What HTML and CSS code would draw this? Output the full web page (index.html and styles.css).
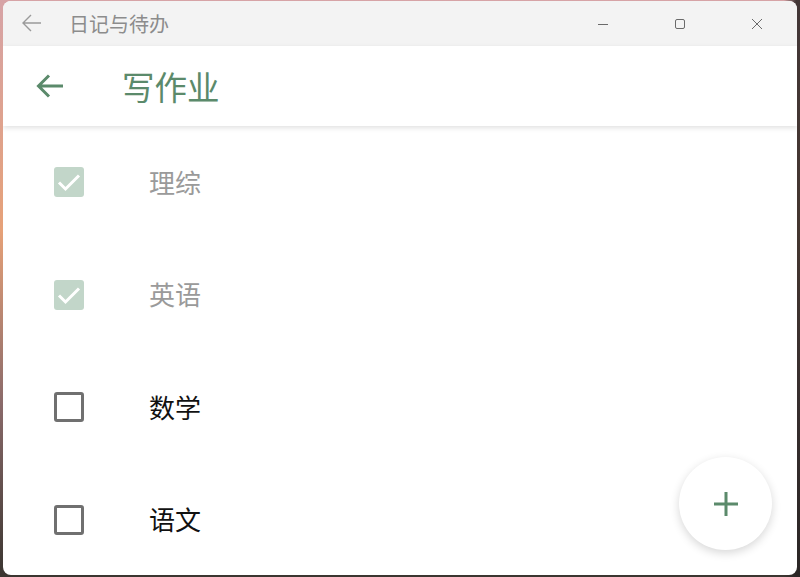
FILE: index.html
```html
<!DOCTYPE html>
<html lang="zh">
<head>
<meta charset="utf-8">
<link rel="stylesheet" href="styles.css">
</head>
<body>
<div class="window">
  <div class="titlebar">
    <svg class="tb-back" width="22" height="20" viewBox="0 0 22 20"><path d="M20 10H2M10 2L2 10l8 8" fill="none" stroke="#9a9a9a" stroke-width="1.4"/></svg>
    <span class="tb-title">日记与待办</span>
    <div class="tb-controls">
      <span class="ctl"><svg width="12" height="12" viewBox="0 0 12 12"><path d="M1 6.5h10" stroke="#6a6a6a" stroke-width="1"/></svg></span>
      <span class="ctl"><svg width="12" height="12" viewBox="0 0 12 12"><rect x="1.5" y="1.5" width="9" height="9" rx="1.5" fill="none" stroke="#6a6a6a" stroke-width="1"/></svg></span>
      <span class="ctl"><svg width="12" height="12" viewBox="0 0 12 12"><path d="M1 1l10 10M11 1L1 11" stroke="#6a6a6a" stroke-width="1"/></svg></span>
    </div>
  </div>
  <div class="appbar">
    <svg class="ab-back" width="28" height="26" viewBox="0 0 28 26"><path d="M27 13H3M13 2.5L2.5 13 13 23.5" fill="none" stroke="#5b8a6b" stroke-width="3"/></svg>
    <span class="ab-title">写作业</span>
  </div>
  <div class="list">
    <div class="row done">
      <span class="cb"><svg width="30" height="30" viewBox="0 0 30 30"><path d="M5 15.5l6.5 6.5L25 8.5" fill="none" stroke="#fff" stroke-width="3"/></svg></span>
      <span class="label">理综</span>
    </div>
    <div class="row done">
      <span class="cb"><svg width="30" height="30" viewBox="0 0 30 30"><path d="M5 15.5l6.5 6.5L25 8.5" fill="none" stroke="#fff" stroke-width="3"/></svg></span>
      <span class="label">英语</span>
    </div>
    <div class="row">
      <span class="cb"></span>
      <span class="label">数学</span>
    </div>
    <div class="row">
      <span class="cb"></span>
      <span class="label">语文</span>
    </div>
  </div>
  <button class="fab"><svg width="26" height="26" viewBox="0 0 26 26"><path d="M13 1v24M1 13h24" stroke="#5b8a6b" stroke-width="3"/></svg></button>
</div>
</body>
</html>
```
FILE: styles.css
```css
html, body {
  margin: 0;
  padding: 0;
  width: 800px;
  height: 577px;
  overflow: hidden;
}
body {
  background:
    linear-gradient(90deg, rgba(0,0,0,0) 0%, rgba(0,0,0,0) 98%, rgba(40,35,35,0.85) 99.5%),
    linear-gradient(180deg, #d6a3a6 0%, #e6a178 40%, #8a6a6a 70%, #3a3530 100%);
  font-family: "Noto Sans CJK SC", "Noto Sans", sans-serif;
  padding: 1px 3px 2px 3px;
  box-sizing: border-box;
}
.window {
  position: relative;
  height: 574px;
  background: #fff;
  border-radius: 8px;
  overflow: hidden;
  display: flex;
  flex-direction: column;
}
.titlebar {
  height: 45px;
  flex: none;
  background: #f3f3f3;
  display: flex;
  align-items: center;
}
.tb-back {
  margin-left: 18px;
  margin-top: -2px;
}
.tb-title {
  margin-left: 26px;
  font-size: 20px;
  color: #8c8c8c;
  margin-top: -1px;
}
.tb-controls {
  margin-left: auto;
  display: flex;
  margin-right: 2px;
}
.ctl {
  width: 77px;
  height: 45px;
  display: flex;
  align-items: center;
  justify-content: center;
}
.appbar {
  height: 80px;
  flex: none;
  display: flex;
  align-items: center;
  background: #fff;
  box-shadow: 0 2px 5px rgba(0,0,0,0.12);
  position: relative;
  z-index: 1;
}
.ab-back {
  margin-left: 33px;
}
.ab-title {
  margin-left: 58px;
  font-size: 32.5px;
  color: #5b8a6b;
  margin-top: -2px;
}
.list {
  flex: 1;
  display: flex;
  flex-direction: column;
}
.row {
  height: 112.5px;
  flex: none;
  display: flex;
  align-items: center;
}
.cb {
  width: 30px;
  height: 30px;
  box-sizing: border-box;
  margin-left: 51px;
  border: 3px solid #707070;
  border-radius: 3px;
  display: flex;
  align-items: center;
  justify-content: center;
  flex: none;
}
.row.done .cb {
  border: none;
  background: #c2d6c9;
}
.label {
  margin-left: 65px;
  font-size: 26px;
  color: #111;
  margin-top: -2px;
}
.row.done .label {
  color: #9a9a9a;
}
.fab {
  position: absolute;
  left: 676px;
  top: 456px;
  width: 93px;
  height: 93px;
  border-radius: 50%;
  border: none;
  background: #fff;
  box-shadow: 0 3px 10px rgba(0,0,0,0.16);
  display: flex;
  align-items: center;
  justify-content: center;
  padding: 0;
}
```
